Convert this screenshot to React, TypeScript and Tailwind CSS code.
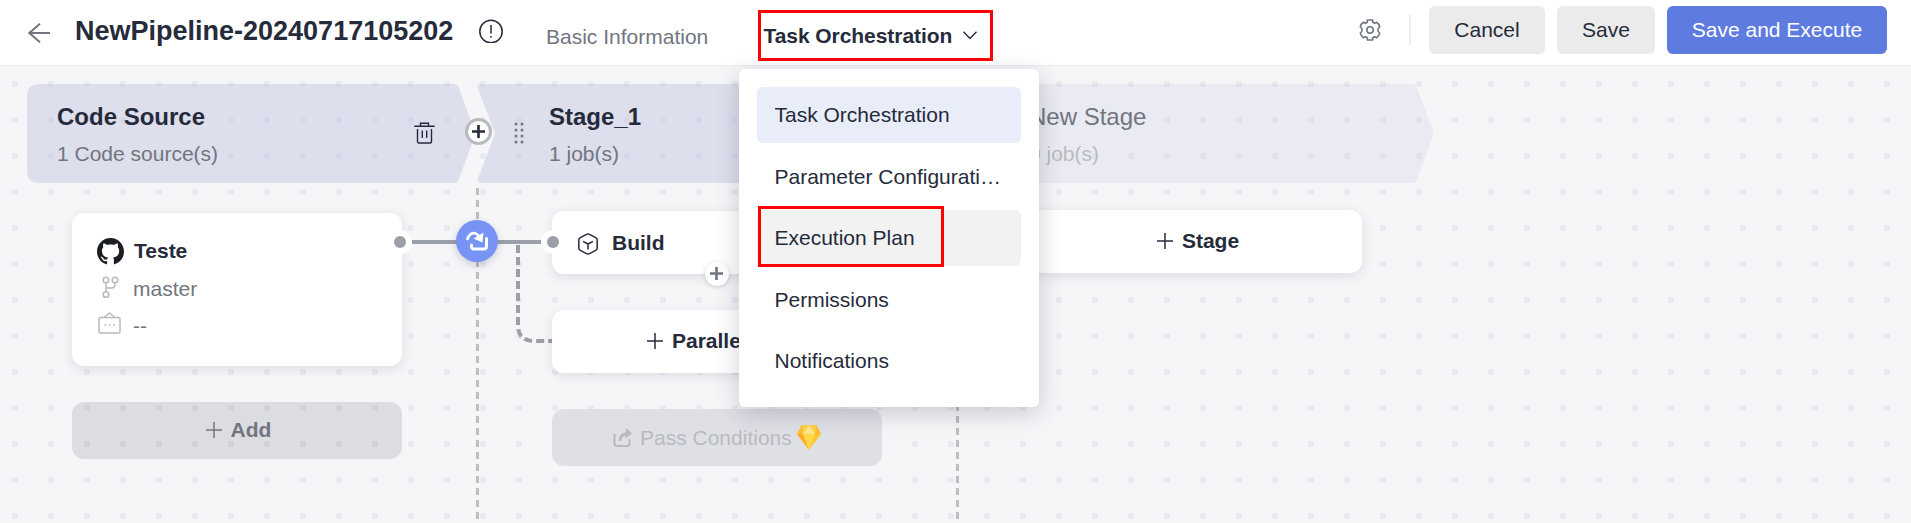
import { ReactNode } from "react";

const INK = "#252b3a";

function Plus({ size, width, color }: { size: number; width: number; color: string }) {
  return (
    <svg width={size} height={size} viewBox={`0 0 ${size} ${size}`} className="block shrink-0" stroke={color} strokeWidth={width}>
      <path d={`M${size / 2} 0V${size}M0 ${size / 2}H${size}`} />
    </svg>
  );
}

function StageShape({ first, color }: { first?: boolean; color: string }) {
  const shape = first
    ? "M12 0H427Q430.500 0 432 4L447.500 46.500Q448.500 49.500 447.500 52.500L432 95Q430.500 99 427 99H12Q0 99 0 87V12Q0 0 12 0Z"
    : "M4 0H455Q458.500 0 460 4L476 46.500Q477 49.500 476 52.500L460 95Q458.500 99 455 99H4Q-1 99 1 94L17 52.500Q18 49.500 17 46.500L1 5Q-1 0 4 0Z";
  return (
    <svg className="absolute inset-0 h-full w-full overflow-visible" fill={color}>
      <path d={shape} />
    </svg>
  );
}

function Stage({ first, muted, title, sub, children }: { first?: boolean; muted?: boolean; title: string; sub: string; children?: ReactNode }) {
  return (
    <div className={`relative h-[99px] shrink-0 ${first ? "w-[450px] pl-[30px]" : "w-[480px] pl-[72px]"} pt-[16px]`}>
      <StageShape first={first} color={muted ? "rgba(190,198,220,0.22)" : "rgba(184,190,217,0.4)"} />
      <div className={`relative text-[24px] leading-[34px] ${muted ? "text-[#71757f]" : "font-bold text-[#252b3a]"}`}>{title}</div>
      <div className={`relative mt-[6px] text-[21px] leading-[28px] ${muted ? "text-[#babbc0]" : "text-[#71757f]"}`}>{sub}</div>
      {children}
    </div>
  );
}

const card = "relative w-[330px] rounded-[12px] bg-white shadow-[0_3px_12px_rgba(37,43,58,0.12)]";

function Dot({ side }: { side: string }) {
  return (
    <div className={`absolute z-10 flex size-6 items-center justify-center rounded-full bg-white ${side}`}>
      <div className="size-3 rounded-full bg-[#9b9fa8]" />
    </div>
  );
}

function MenuItem({ label, tone = "" }: { label: string; tone?: string }) {
  return (
    <div className={`h-[56px] rounded-[6px] pr-[18px] pl-[17.5px] ${tone}`}>
      <div className="truncate text-[21px] leading-[56px]">{label}</div>
    </div>
  );
}

export default function App() {
  return (
    <div className="relative flex h-[523px] w-[1911px] flex-col overflow-hidden bg-[#f6f6f9] font-['Liberation_Sans',Arial,sans-serif] text-[#252b3a]">
      <header className="flex h-[66px] shrink-0 items-start border-b border-[#ebebef] bg-white pr-[24px] pl-[28px]">
        <svg className="mt-[23px] shrink-0" width="22" height="20" fill="none" stroke="#71757f" strokeWidth="1.9">
          <path d="M22 10H1M12 .7 1.300 10 12 19.300" />
        </svg>
        <h1 className="ml-[25px] w-[379px] text-[27px] leading-[62px] font-bold whitespace-nowrap">NewPipeline-20240717105202</h1>
        <svg className="mt-[19px] ml-[25px] shrink-0" width="24" height="24" fill="none" stroke={INK} strokeWidth="1.5">
          <circle cx="12" cy="12.500" r="11.200" />
          <path d="M12 6v8.500M12 17v1.800" />
        </svg>
        <nav className="flex items-start whitespace-nowrap">
          <span className="ml-[43px] w-[163px] text-[21px] leading-[74px] text-[#71757f]">Basic Information</span>
          <div className="mt-[10px] ml-[49px] flex h-[51px] w-[235px] items-center border-[3px] border-[#ff0000] pl-[2.5px]">
            <span className="text-[21px] leading-[45px] font-bold tracking-[-0.06px]">Task Orchestration</span>
            <svg className="ml-[11px]" width="14" height="9" fill="none" stroke={INK} strokeWidth="1.4">
              <path d="M.5 .8 7 7.600 13.500 .8" />
            </svg>
          </div>
        </nav>
        <div className="ml-auto flex items-start">
          <svg className="mt-[19px]" width="22" height="22" viewBox="0 0 22 22" fill="none" stroke="#71757f" strokeWidth="1.6" strokeLinejoin="round">
            <path d="M8.300 1H13.700V3.200L15.600 4.300 17.600 3.200Q20 4.600 20.700 7.800Q18.900 9 18.900 11T20.700 14.200Q20 17.400 17.600 18.800L15.600 17.700 13.700 18.800V21H8.300V18.800L6.400 17.700 4.400 18.800Q2 17.400 1.300 14.200Q3.100 13 3.100 11T1.300 7.800Q2 4.600 4.400 3.200L6.400 4.300 8.300 3.200Z" />
            <circle cx="11" cy="11" r="3.200" />
          </svg>
          <div className="mt-[15px] ml-[28px] h-[30px] w-[2px] bg-[#ebebf3]" />
          <div className="mt-[6px] ml-[18px] flex gap-[12px] text-[21px] leading-[48px]">
            <button className="h-[48px] w-[116px] rounded-[6px] bg-[#ebebeb]">Cancel</button>
            <button className="h-[48px] w-[98px] rounded-[6px] bg-[#ebebeb]">Save</button>
            <button className="h-[48px] w-[220px] rounded-[6px] bg-[#5e7ce0] text-white">Save and Execute</button>
          </div>
        </div>
      </header>

      <main className="relative flex-1 bg-[radial-gradient(circle_at_center,#e9e9f1_3px,transparent_3.5px)] bg-size-[36px_36px] bg-position-[-3px_0px] pt-[18px]">
        <div className="flex pl-[27px]">
          <Stage first title="Code Source" sub="1 Code source(s)">
            <svg className="absolute top-[38px] left-[387px]" width="21" height="22" fill="none" stroke={INK} strokeWidth="1.4">
              <path d="M.3 4.200H20.700M6.500 4V1.200H14.500V4M3.500 7V19.500Q3.500 21 5 21H16Q17.500 21 17.500 19.500V7M8.300 8.500V16M12.700 8.500V16" />
            </svg>
            <div className="absolute top-[34px] left-[438px] z-10 flex size-[27px] items-center justify-center rounded-full border-[3px] border-[#b9babf] bg-white">
              <Plus size={13} width={2.6} color={INK} />
            </div>
          </Stage>
          <Stage title="Stage_1" sub="1 job(s)">
            <svg className="absolute top-[38px] left-[37px]" width="10" height="22" fill="#71757f">
              {[2, 8, 14, 20].map((y) => (
                <g key={y}>
                  <circle cx="2" cy={y} r="1.500" />
                  <circle cx="8" cy={y} r="1.500" />
                </g>
              ))}
            </svg>
          </Stage>
          <Stage muted title="New Stage" sub="0 job(s)" />
        </div>

        <svg className="absolute top-0 left-0" width="1911" height="457" fill="none">
          <path d="M477.500 122V457M957.500 122V457" stroke="#bdbdbd" strokeWidth="3" strokeDasharray="7 5" />
          <path d="M412 176H541" stroke="#9b9fa8" strokeWidth="4" />
          <path d="M518 179V259Q518 275 534 275H552" stroke="#9b9fa8" strokeWidth="4" strokeDasharray="8 4" />
        </svg>

        <div className="relative flex items-start gap-[150px] pl-[72px]">
          <section className="pt-[30px]">
            <div className={`${card} h-[153px] pt-[19px] pl-[25px]`}>
              <div className="flex h-[38px] items-center text-[21px] font-bold">
                <svg width="27" height="27" viewBox="0 0 16 16" fill="#1b1f23" className="mr-[10px]">
                  <path d="M8 0C3.580 0 0 3.580 0 8c0 3.540 2.290 6.530 5.470 7.590.4.070.55-.17.55-.38 0-.19-.01-.82-.01-1.490-2.010.37-2.530-.49-2.690-.94-.09-.23-.48-.94-.82-1.130-.28-.15-.68-.52-.01-.53.63-.01 1.080.58 1.230.82.72 1.210 1.870.87 2.330.66.070-.52.28-.87.51-1.070-1.780-.2-3.640-.89-3.640-3.950 0-.87.31-1.590.82-2.150-.08-.2-.36-1.020.08-2.120 0 0 .67-.21 2.200.82.64-.18 1.320-.27 2-.27s1.360.09 2 .27c1.530-1.040 2.200-.82 2.200-.82.44 1.100.16 1.920.08 2.120.51.56.82 1.270.82 2.150 0 3.070-1.870 3.750-3.650 3.950.29.25.54.73.54 1.480 0 1.070-.01 1.930-.01 2.200 0 .21.15.46.55.38A8.010 8.010 0 0 0 16 8c0-4.420-3.580-8-8-8z" />
                </svg>
                Teste
              </div>
              <div className="flex h-[37px] items-center text-[21px] text-[#71757f]">
                <svg className="-mt-[3px] mr-[14px] ml-[5px]" width="17" height="22" fill="none" stroke="#b9babf" strokeWidth="1.5">
                  <circle cx="4" cy="4" r="2.800" />
                  <circle cx="13" cy="4" r="2.800" />
                  <circle cx="4" cy="18.500" r="2.800" />
                  <path d="M4 7V15.500M4 12H10Q13 12 13 7" />
                </svg>
                master
              </div>
              <div className="flex h-[37px] items-center text-[21px] text-[#71757f]">
                <svg className="mr-[12px] -mt-[6px] ml-[1px]" width="23" height="22" fill="none" stroke="#b9babf" strokeWidth="1.500">
                  <rect x="1" y="5.500" width="21" height="15.500" rx="1.500" />
                  <path d="M6 5.500 11.500 1 17 5.500M6.500 13h1.600M10.700 13h1.600M15 13h1.600" />
                </svg>
                --
              </div>
              <Dot side="top-[17px] left-[316px]" />
            </div>
            <div className="mt-[36px] flex h-[57px] w-[330px] items-center justify-center gap-[9px] rounded-[12px] bg-[rgba(37,43,58,0.12)] pb-[2px] pl-[3px] text-[21px] font-bold text-[#71757f]">
              <Plus size={16} width={1.5} color="#71757f" />
              Add
            </div>
          </section>

          <section className="pt-[28px]">
            <div className={`${card} flex h-[63px] items-center pl-[26px] text-[21px] font-bold`}>
              <svg className="mt-[3px] mr-[14px]" width="20" height="22" fill="none" stroke={INK} strokeWidth="1.500" strokeLinejoin="round">
                <path d="M8.500 1.300Q10 .5 11.500 1.300L17.700 4.700Q19.200 5.600 19.200 7V15Q19.200 16.400 17.700 17.300L11.500 20.700Q10 21.500 8.500 20.700L2.300 17.300Q.8 16.400 .8 15V7Q.8 5.600 2.300 4.700ZM5 8.300 10 11 15 8.300M10 11V16.500" />
              </svg>
              Build
              <Dot side="top-[19px] left-[-11px]" />
              <div className="absolute top-[51px] left-[153px] flex size-6 items-center justify-center rounded-full bg-white pr-px pb-px shadow-[0_1px_4px_rgba(37,43,58,0.22)]">
                <Plus size={13} width={2.6} color="#71757f" />
              </div>
            </div>
            <div className={`${card} mt-[36px] flex h-[63px] items-center gap-[9px] pb-[2px] pl-[95px] text-[21px] font-bold`}>
              <Plus size={16} width={1.5} color={INK} />
              Parallel Job
            </div>
            <div className="mt-[36px] flex h-[57px] w-[330px] items-center rounded-[12px] bg-[#dfe0e6] pl-[61px] text-[21px] text-[#b9babf]">
              <svg className="mr-[8px]" width="19" height="19" fill="none" stroke="#b9babf" strokeWidth="2">
                <path d="M1.500 6V15.500Q1.500 18 4 18H14Q16.500 18 16.500 15.500V11.500" />
                <path d="M7 13Q7 6.500 14 5.500" strokeWidth="3" />
                <path d="M13 0 19 5.500 12.500 10Z" fill="#b9babf" stroke="none" />
              </svg>
              Pass Conditions
              <svg className="ml-[5px]" width="24" height="25" viewBox="0 0 24 25">
                <path d="M5 0H19L24 9 12 25 0 9Z" fill="#ffc72e" />
                <path d="M5 0 0 9H6ZM19 0 24 9H18Z" fill="#ffbf2b" />
                <path d="M5 0H19L18 9H6Z" fill="#ffd24d" />
                <path d="M12 0 18 9H6Z" fill="#ffe88c" />
                <path d="M0 9H6L12 25Z" fill="#ffae28" />
                <path d="M6 9H18L12 25Z" fill="#ffd84c" />
              </svg>
            </div>
          </section>

          <section className="pt-[27px]">
            <div className={`${card} flex h-[63px] items-center justify-center gap-[9px] pb-[2px] pl-[2px] text-[21px] font-bold`}>
              <Plus size={16} width={1.5} color={INK} />
              Stage
            </div>
          </section>
        </div>

        <div className="absolute top-[154px] left-[456px] z-10 flex size-[42px] items-center justify-center rounded-full bg-[#7693f5] shadow-[0_3px_9px_rgba(37,43,58,0.2)]">
          <svg width="22" height="20" fill="none" stroke="white" strokeWidth="3" strokeLinecap="round">
            <path d="M1.500 8Q4 1 9 2.300Q11.500 3 13.500 6" strokeWidth="2.600" />
            <path d="M17.500 1.500 16.500 11.500 7.500 7.500Z" fill="white" stroke="none" />
            <path d="M5.500 14V15.500Q5.500 18 8 18H18Q20.500 18 20.500 15.500V7.500" />
          </svg>
        </div>
      </main>

      <div className="absolute top-[69px] left-[739px] z-20 flex h-[338px] w-[300px] flex-col justify-between rounded-[6px] bg-white p-[18px] shadow-[0_6px_24px_rgba(37,43,58,0.22)]">
        <MenuItem label="Task Orchestration" tone="bg-[#e9edfa]" />
        <MenuItem label="Parameter Configuration" />
        <div className="relative">
          <MenuItem label="Execution Plan" tone="bg-[#f2f2f3]" />
          <div className="absolute top-[-4px] left-[1px] h-[61px] w-[186px] border-[3px] border-[#ff0000]" />
        </div>
        <MenuItem label="Permissions" />
        <MenuItem label="Notifications" />
      </div>
    </div>
  );
}
